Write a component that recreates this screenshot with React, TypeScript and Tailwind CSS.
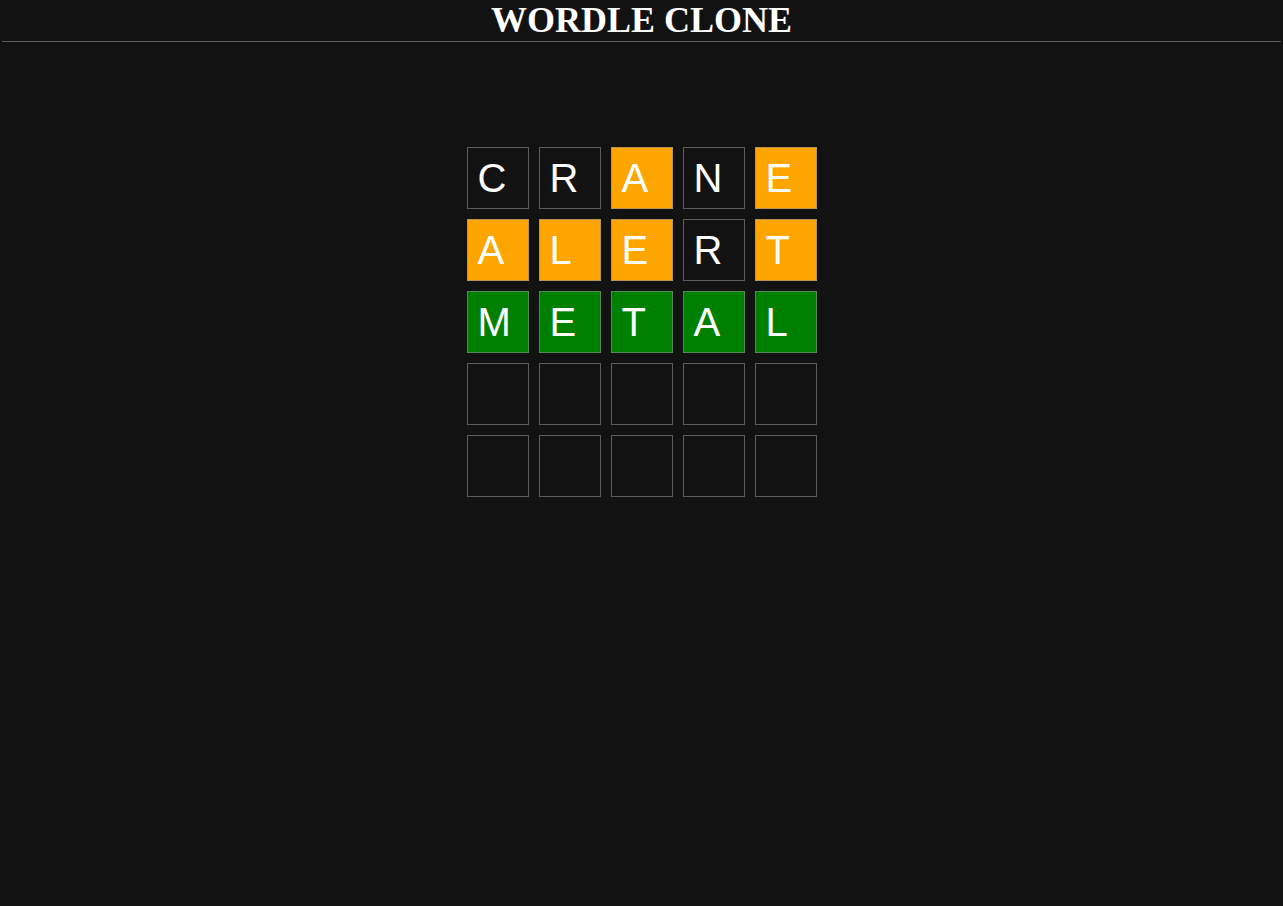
import React from "react";

type S = "g" | "y" | "n" | "e";
const rows: { l: string; s: S }[][] = [
  [
    { l: "C", s: "n" },
    { l: "R", s: "n" },
    { l: "A", s: "y" },
    { l: "N", s: "n" },
    { l: "E", s: "y" },
  ],
  [
    { l: "A", s: "y" },
    { l: "L", s: "y" },
    { l: "E", s: "y" },
    { l: "R", s: "n" },
    { l: "T", s: "y" },
  ],
  [
    { l: "M", s: "g" },
    { l: "E", s: "g" },
    { l: "T", s: "g" },
    { l: "A", s: "g" },
    { l: "L", s: "g" },
  ],
  Array.from({ length: 5 }, () => ({ l: "", s: "e" as S })),
  Array.from({ length: 5 }, () => ({ l: "", s: "e" as S })),
];

const bg: Record<S, string> = {
  g: "bg-[#008000]",
  y: "bg-[#ffa500]",
  n: "bg-[#121212]",
  e: "bg-[#121212]",
};

export default function App() {
  return (
    <div className="min-h-screen bg-[#121212] text-white">
      <header className="mx-[2px] border-b border-[#5a5a5a]">
        <h1
          className="text-center text-[36px] font-bold leading-[41px] text-white"
          style={{ fontFamily: '"Liberation Serif", "Times New Roman", serif' }}
        >
          WORDLE CLONE
        </h1>
      </header>
      <div className="flex justify-center pt-[105px]">
        <div className="flex flex-col gap-[10px]">
          {rows.map((row, i) => (
            <div key={i} className="flex gap-[10px]">
              {row.map((c, j) => (
                <div
                  key={j}
                  className={`flex h-[62px] w-[62px] items-center border border-[#8a8a8aa0] pl-[10px] text-[40px] text-white ${bg[c.s]}`}
                  style={{ fontFamily: '"Liberation Sans", Arial, sans-serif' }}
                >
                  {c.l}
                </div>
              ))}
            </div>
          ))}
        </div>
      </div>
    </div>
  );
}
